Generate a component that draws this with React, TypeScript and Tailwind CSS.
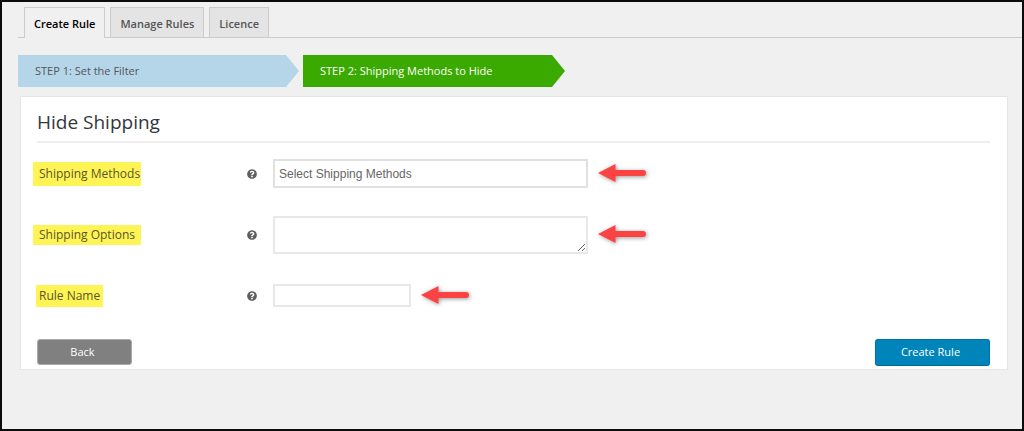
import { ReactNode } from "react"
import { FaQuestionCircle } from "react-icons/fa"

const tabs = ["Create Rule", "Manage Rules", "Licence"]

const Arrow = () => (
  <svg
    width="56"
    height="28"
    viewBox="0 0 56 28"
    className="shrink-0 drop-shadow-[1px_1px_2px_rgba(0,0,0,0.4)]"
    aria-hidden="true"
  >
    <path d="M4 14 L21.5 5 V11 H49 A3 3 0 0 1 49 17 H21.5 V23 Z" fill="#fc4343" />
  </svg>
)

interface FieldRowProps {
  id: string
  label: string
  labelClass: string
  children: ReactNode
}

const FieldRow = ({ id, label, labelClass, children }: FieldRowProps) => (
  <div className="flex h-[61px] items-center">
    <div className="-ml-1 flex w-[214px] shrink-0">
      <label htmlFor={id} className={`bg-[#fff455] text-[12px] text-[#59562b] ${labelClass}`}>
        {label}
      </label>
    </div>
    <FaQuestionCircle className="mr-4 size-[10px] shrink-0 text-[#5f5f5f]" />
    {children}
    <div className="ml-[6px] flex pb-[2px]">
      <Arrow />
    </div>
  </div>
)

export default function App() {
  return (
    <div className="min-h-screen border-2 border-[#0c0a0b] bg-[#f0f0f0] pt-[5px] font-['Open_Sans',sans-serif] text-[#444]">
      <nav className="ml-4 flex gap-[5px] border-b border-[#ccc] pl-[6px]">
        {tabs.map((tab, index) => (
          <a
            key={tab}
            href="#"
            className={
              index === 0
                ? "-mb-px border border-b-0 border-[#ccc] bg-[#f0f0f0] px-[9px] pt-[4px] pb-[2px] text-[11px] leading-6 font-semibold text-black"
                : "border border-b-0 border-[#ccc] bg-[#e4e4e4] px-[9px] pt-[4px] pb-px text-[11px] leading-6 font-semibold text-[#555]"
            }
          >
            {tab}
          </a>
        ))}
      </nav>

      <div className="mt-[17px] ml-4 flex gap-1 text-[11px] leading-8">
        <div className="w-[281px] bg-[#b5d6e9] pl-[17px] text-[#555] [clip-path:polygon(0_0,calc(100%-13px)_0,100%_50%,calc(100%-13px)_100%,0_100%)]">
          STEP 1: Set the Filter
        </div>
        <div className="w-[262px] bg-[#3aaa00] pl-[17px] text-white [clip-path:polygon(0_0,calc(100%-13px)_0,100%_50%,calc(100%-13px)_100%,0_100%)]">
          STEP 2: Shipping Methods to Hide
        </div>
      </div>

      <form
        onSubmit={e => e.preventDefault()}
        className="mt-[9px] mr-[14px] ml-[18px] border border-[#e5e5e5] bg-white pr-[17px] pb-[3px] pl-4"
      >
        <h2 className="border-b-2 border-[#eee] pt-[10px] pb-[4px] text-[19px] leading-[30px] text-[#32373c]">
          Hide Shipping
        </h2>

        <FieldRow id="methods" label="Shipping Methods" labelClass="pl-[6px] pr-px leading-6">
          <input
            id="methods"
            type="text"
            placeholder="Select Shipping Methods"
            className="h-[29px] w-[315px] border-2 border-[#e0e0e0] px-1 font-['Liberation_Sans',sans-serif] text-[12px] placeholder:text-[#666]"
          />
        </FieldRow>
        <FieldRow id="options" label="Shipping Options" labelClass="pl-[6px] pr-[6px] leading-5">
          <textarea id="options" className="block h-[38px] w-[315px] border-2 border-[#e8e8e8]" />
        </FieldRow>
        <FieldRow id="name" label="Rule Name" labelClass="ml-[3px] px-[3px] leading-[22px]">
          <input id="name" type="text" className="h-[23px] w-[138px] border-2 border-[#e8e8e8] px-1 text-[12px]" />
        </FieldRow>

        <div className="flex justify-between pt-[13px] text-[11px] text-white">
          <button type="button" className="h-[26px] w-[95px] rounded-[3px] border border-[#aaa] bg-[#808080] pr-1">
            Back
          </button>
          <button
            type="submit"
            className="h-[27px] w-[115px] rounded-[3px] border border-[#0073aa] border-b-[#006799] bg-[#0085ba] pr-1"
          >
            Create Rule
          </button>
        </div>
      </form>
    </div>
  )
}
